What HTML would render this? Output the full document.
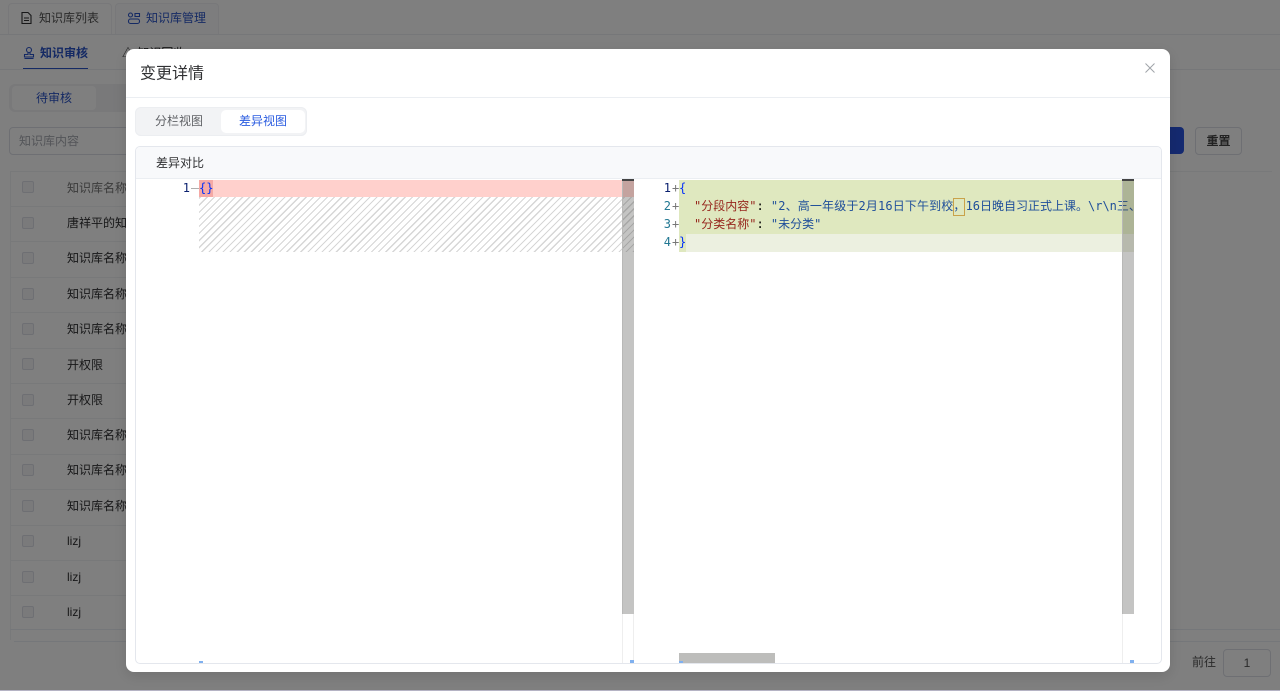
<!DOCTYPE html>
<html lang="zh">
<head>
<meta charset="utf-8">
<title>变更详情</title>
<style>
html,body{margin:0;padding:0;width:1280px;height:691px;overflow:hidden;background:#fff}
body{position:relative;font-family:"Liberation Sans","Noto Sans CJK SC",sans-serif;color:#303133}
#w{position:absolute;left:0;top:0;width:1280px;height:691px;overflow:hidden;filter:blur(.3px)}
.a{position:absolute;white-space:nowrap}
.t{font-size:12px;line-height:18px;color:#303133}
.line{position:absolute;left:10px;width:620px;height:1px;background:#f1f2f5}
.cb{position:absolute;left:22px;width:10px;height:10px;border:1px solid #dcdfe6;border-radius:2px;background:#f4f5f7}
.mono{font-family:"DejaVu Sans Mono","Noto Sans CJK SC",monospace;font-size:12px;line-height:18px;white-space:pre;position:absolute}
.k{color:#96261c}.s{color:#1f4f9a}.p{color:#000}.b{color:#0431fa}
.n{position:absolute;font-family:"DejaVu Sans Mono",monospace;font-size:12px;line-height:18px;text-align:right;width:12px}
</style>
</head>
<body>
<div id="w">
<!-- background page -->
<div class="a" style="left:8px;top:3px;width:102px;height:31px;border:1px solid #f0f1f4;border-bottom:0;border-radius:4px 4px 0 0"></div>
<div class="a" style="left:115px;top:3px;width:102px;height:31px;border:1px solid #f0f1f4;border-bottom:0;border-radius:4px 4px 0 0;background:#fafbfc"></div>
<div class="a" style="left:0;top:34px;width:1280px;height:1px;background:#eceef2"></div>
<svg class="a" style="left:20px;top:11px" width="13" height="14" viewBox="0 0 13 14" fill="none" stroke="#303133" stroke-width="1.1"><path d="M2 1.500h6l3 3v8h-9z"/><path d="M4 7h5M4 9.500h5"/></svg>
<div class="a" style="left:39px;top:9px;font-size:12px;line-height:18px;color:#555">知识库列表</div>
<svg class="a" style="left:127px;top:11px" width="14" height="14" viewBox="0 0 14 14" fill="none" stroke="#2b54c8" stroke-width="1.1"><rect x="1.500" y="2" width="4" height="4" rx="2"/><path d="M8 2.500h4.500v3H8z"/><rect x="1.500" y="8" width="11" height="4.500" rx="2"/></svg>
<div class="a" style="left:146px;top:9px;font-size:12px;line-height:18px;color:#2b54c8">知识库管理</div>
<svg class="a" style="left:23px;top:46px" width="12" height="14" viewBox="0 0 12 14" fill="none" stroke="#2b54c8" stroke-width="1.1"><circle cx="6" cy="4" r="2.500"/><path d="M5 6.500v2H1.500v2.500h9V8.500H7v-2M1.500 12.500h9"/></svg>
<div class="a" style="left:40px;top:44px;font-size:12px;line-height:18px;font-weight:700;color:#2b54c8">知识审核</div>
<div class="a" style="left:23px;top:68px;width:65px;height:2px;background:#2b54c8"></div>
<div class="a" style="left:0;top:69px;width:1280px;height:1px;background:#eceef2"></div>
<div class="a" style="left:122px;top:44px;font-size:12px;line-height:18px;color:#303133">△ 知识回收</div>
<div class="a" style="left:9px;top:84px;width:300px;height:28px;background:#f2f3f5;border-radius:6px"></div>
<div class="a" style="left:12px;top:86px;width:84px;height:24px;background:#fff;border-radius:4px;text-align:center;font-size:12px;line-height:24px;color:#2b54c8">待审核</div>
<div class="a" style="left:9px;top:127px;width:200px;height:26px;border:1px solid #dcdfe6;border-radius:4px;font-size:12px;line-height:26px;color:#a8abb2;text-indent:9px">知识库内容</div>
<div class="a" style="left:1150px;top:127px;width:34px;height:27px;background:#2b54e0;border-radius:0 4px 4px 0"></div>
<div class="a" style="left:1195px;top:127px;width:45px;height:26px;border:1px solid #dcdfe6;border-radius:4px;text-align:center;font-size:12px;line-height:26px;color:#444;font-weight:700">重置</div>
<div class="a" style="left:10px;top:171px;width:1262px;height:1px;background:#f1f2f5"></div>
<div class="a" style="left:10px;top:171px;width:1px;height:469px;background:#f1f2f5"></div>
<div class="cb" style="top:181px"></div><div class="a t" style="left:67px;top:179px;color:#777">知识库名称</div>
<div class="line" style="top:206px"></div><div class="cb" style="top:217px"></div><div class="a t" style="left:67px;top:214px">唐祥平的知识库</div>
<div class="line" style="top:241px"></div><div class="cb" style="top:252px"></div><div class="a t" style="left:67px;top:249px">知识库名称</div>
<div class="line" style="top:277px"></div><div class="cb" style="top:288px"></div><div class="a t" style="left:67px;top:285px">知识库名称</div>
<div class="line" style="top:312px"></div><div class="cb" style="top:323px"></div><div class="a t" style="left:67px;top:320px">知识库名称</div>
<div class="line" style="top:348px"></div><div class="cb" style="top:358px"></div><div class="a t" style="left:67px;top:356px">开权限</div>
<div class="line" style="top:383px"></div><div class="cb" style="top:394px"></div><div class="a t" style="left:67px;top:391px">开权限</div>
<div class="line" style="top:418px"></div><div class="cb" style="top:429px"></div><div class="a t" style="left:67px;top:426px">知识库名称</div>
<div class="line" style="top:454px"></div><div class="cb" style="top:464px"></div><div class="a t" style="left:67px;top:461px">知识库名称</div>
<div class="line" style="top:489px"></div><div class="cb" style="top:500px"></div><div class="a t" style="left:67px;top:497px">知识库名称</div>
<div class="line" style="top:525px"></div><div class="cb" style="top:535px"></div><div class="a t" style="left:67px;top:532px">lizj</div>
<div class="line" style="top:560px"></div><div class="cb" style="top:571px"></div><div class="a t" style="left:67px;top:568px">lizj</div>
<div class="line" style="top:595px"></div><div class="cb" style="top:606px"></div><div class="a t" style="left:67px;top:603px">lizj</div>
<div class="a" style="left:10px;top:629px;width:1270px;height:1px;background:#ebeef5"></div>
<div class="a" style="left:14px;top:641px;width:1266px;height:1px;background:#ebeef5"></div>
<div class="a" style="left:1192px;top:653px;font-size:12px;line-height:18px;color:#555">前往</div>
<div class="a" style="left:1223px;top:649px;width:46px;height:26px;border:1px solid #dcdfe6;border-radius:4px;text-align:center;font-size:12px;line-height:26px;color:#555">1</div>

<!-- overlay -->
<div class="a" style="left:0;top:0;width:1280px;height:690px;background:rgba(0,0,0,.5)"></div>
<div class="a" style="left:0;top:690px;width:1280px;height:1px;background:#b5b3c4"></div>

<!-- dialog -->
<div class="a" style="left:126px;top:49px;width:1044px;height:623px;background:#fff;border-radius:8px;box-shadow:0 4px 14px rgba(0,0,0,.12)"></div>
<div class="a" style="left:140px;top:62px;font-size:16px;line-height:22px;color:#303133;transform:translateY(1.500px)">变更详情</div>
<svg class="a" style="left:1144px;top:62px" width="12" height="12" viewBox="0 0 12 12" fill="none" stroke="#a0a3a9" stroke-width="1"><path d="M1.500 1.500l9 9M10.500 1.500l-9 9"/></svg>
<div class="a" style="left:126px;top:97px;width:1044px;height:1px;background:#ebeef2"></div>

<div class="a" style="left:135px;top:107px;width:172px;height:29px;background:#f2f3f5;border-radius:6px;box-shadow:inset 0 0 0 1px #eceef1"></div>
<div class="a" style="left:155px;top:112px;font-size:12px;line-height:18px;color:#606266">分栏视图</div>
<div class="a" style="left:221px;top:110px;width:84px;height:23px;background:#fff;border-radius:5px;text-align:center;font-size:12px;line-height:23px;color:#2b5ce0">差异视图</div>

<!-- diff card -->
<div class="a" style="left:135px;top:146px;width:1025px;height:516px;border:1px solid #e4e7ed;border-radius:5px;background:#fff"></div>
<div class="a" style="left:136px;top:147px;width:1025px;height:32px;background:#f8f9fb;border-radius:4px 4px 0 0;border-bottom:1px solid #ebeef2;box-sizing:border-box"></div>
<div class="a" style="left:156px;top:154px;font-size:12px;line-height:18px;color:#303133">差异对比</div>

<!-- left pane -->
<div class="n" style="left:178px;top:179px;color:#0b216f">1</div>
<div class="a" style="left:191px;top:188px;width:8px;height:1px;background:#b0b0b0"></div>
<div class="a" style="left:199px;top:180px;width:435px;height:17px;background:#ffd0cc"></div>
<div class="a" style="left:199px;top:180px;width:14px;height:17px;background:#f5a9a5"></div>
<div class="mono b" style="left:199px;top:179px">{}</div>
<div class="a" style="left:199px;top:197px;width:435px;height:55px;background:repeating-linear-gradient(-45deg,#d6d6d6 0,#d6d6d6 1.200px,#fff 1.200px,#fff 5px)"></div>
<div class="a" style="left:622px;top:180px;width:1px;height:483px;background:#eee"></div>
<div class="a" style="left:622px;top:180px;width:12px;height:434px;background:rgba(60,60,55,.3)"></div>
<div class="a" style="left:622px;top:179px;width:12px;height:2px;background:#444"></div>
<div class="a" style="left:633px;top:614px;width:1px;height:49px;background:#eee"></div>
<div class="a" style="left:199px;top:661px;width:4px;height:2px;background:#7fb0ef"></div>
<div class="a" style="left:630px;top:660px;width:4px;height:3px;background:#7fb0ef"></div>

<!-- right pane -->
<div class="a" style="left:679px;top:180px;width:455px;height:54px;background:#dfe8bf"></div>
<div class="a" style="left:679px;top:234px;width:455px;height:18px;background:#ecf0e0"></div>
<div class="a" style="left:679px;top:234px;width:7px;height:18px;background:#dfe8bf"></div>
<div class="a" style="left:953px;top:198px;width:10px;height:16px;border:1px solid #c9a24a"></div>
<div class="n" style="left:659px;top:179px;color:#0b216f">1</div>
<div class="n" style="left:659px;top:197px;color:#237893">2</div>
<div class="n" style="left:659px;top:215px;color:#237893">3</div>
<div class="n" style="left:659px;top:233px;color:#237893">4</div>
<div class="mono" style="left:672px;top:179px;color:#777">+</div>
<div class="mono" style="left:672px;top:197px;color:#777">+</div>
<div class="mono" style="left:672px;top:215px;color:#777">+</div>
<div class="mono" style="left:672px;top:233px;color:#777">+</div>
<div class="mono b" style="left:679px;top:179px">{</div>
<div class="a" style="left:679px;top:197px;width:455px;height:18px;overflow:hidden"><div class="mono" style="left:15px;top:0"><span class="k">"分段内容"</span><span class="p">: </span><span class="s"><span style="letter-spacing:.14px">"2、高一年级于2月16日下午到校，</span>16日晚自习正式上课。\r\n三、寒假</span></div></div>
<div class="mono" style="left:694px;top:215px"><span class="k">"分类名称"</span><span class="p">: </span><span class="s">"未分类"</span></div>
<div class="mono b" style="left:679px;top:233px">}</div>
<div class="a" style="left:1122px;top:180px;width:1px;height:483px;background:#eee"></div>
<div class="a" style="left:1122px;top:180px;width:12px;height:434px;background:rgba(60,60,55,.3)"></div>
<div class="a" style="left:1122px;top:179px;width:12px;height:2px;background:#444"></div>
<div class="a" style="left:679px;top:653px;width:96px;height:10px;background:#bdbdbb"></div>
<div class="a" style="left:679px;top:661px;width:4px;height:2px;background:#7fb0ef"></div>
<div class="a" style="left:1130px;top:660px;width:4px;height:3px;background:#7fb0ef"></div>
</div>
</body>
</html>
